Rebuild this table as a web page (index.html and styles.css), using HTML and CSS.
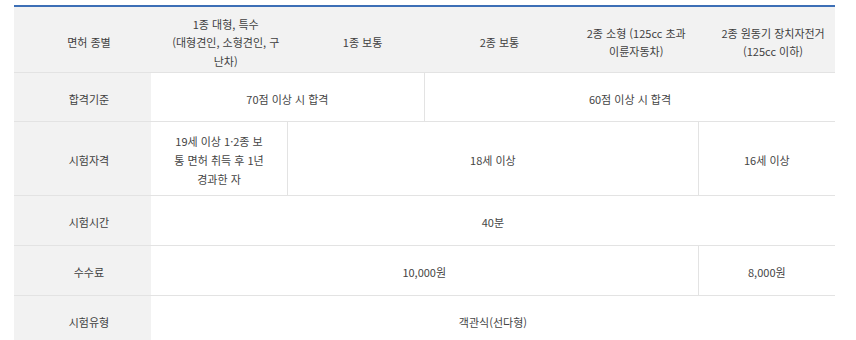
FILE: index.html
```html
<!DOCTYPE html>
<html lang="ko">
<head>
<meta charset="utf-8">
<link rel="stylesheet" href="styles.css">
</head>
<body>
<div class="wrap">
<table class="license">
  <colgroup>
    <col class="c"><col class="c"><col class="c"><col class="c"><col class="c"><col class="c">
  </colgroup>
  <thead>
    <tr class="r-head">
      <th class="shift">면허 종별</th>
      <th class="shift">1종 대형, 특수<br>(대형견인, 소형견인, 구<br>난차)</th>
      <th class="shift">1종 보통</th>
      <th class="shift">2종 보통</th>
      <th class="shift">2종 소형 (125cc 초과<br>이륜자동차)</th>
      <th class="shift">2종 원동기 장치자전거<br>(125cc 이하)</th>
    </tr>
  </thead>
  <tbody>
    <tr class="r-a">
      <th class="shift">합격기준</th>
      <td colspan="2">70점 이상 시 합격</td>
      <td colspan="3" class="vl">60점 이상 시 합격</td>
    </tr>
    <tr class="r-b">
      <th class="shift">시험자격</th>
      <td>19세 이상 1·2종 보<br>통 면허 취득 후 1년<br>경과한 자</td>
      <td colspan="3" class="vl">18세 이상</td>
      <td class="vl">16세 이상</td>
    </tr>
    <tr class="r-c">
      <th class="shift">시험시간</th>
      <td colspan="5">40분</td>
    </tr>
    <tr class="r-c">
      <th class="shift">수수료</th>
      <td colspan="4">10,000원</td>
      <td class="vl">8,000원</td>
    </tr>
    <tr class="r-c">
      <th class="shift">시험유형</th>
      <td colspan="5">객관식(선다형)</td>
    </tr>
  </tbody>
</table>
</div>
</body>
</html>
```
FILE: styles.css
```css
html, body {
  margin: 0;
  padding: 0;
  background: #ffffff;
}
.wrap {
  padding: 5px 0 0 14px;
}
.license {
  width: 821px;
  table-layout: fixed;
  border-collapse: collapse;
  border-top: 2px solid #3d6fb6;
  font-family: "Noto Sans CJK KR", "Noto Sans", sans-serif;
  font-size: 11px;
  line-height: 19px;
  color: #454545;
}
.license th,
.license td {
  text-align: center;
  vertical-align: middle;
  font-weight: normal;
  padding: 5px 0 0 0;
  border-bottom: 1px solid #e3e3e3;
}
.license thead th {
  background: #f2f2f2;
  color: #3f3f3f;
  line-height: 18.5px;
  padding-top: 6px;
}
.license tbody th {
  background: #f2f2f2;
  color: #3f3f3f;
}
.license .shift {
  padding-left: 13px;
}
.license .vl {
  border-left: 1px solid #e3e3e3;
}
.r-head { height: 66px; }
.r-a { height: 49px; }
.r-b { height: 74px; }
.r-c { height: 50px; }
```
